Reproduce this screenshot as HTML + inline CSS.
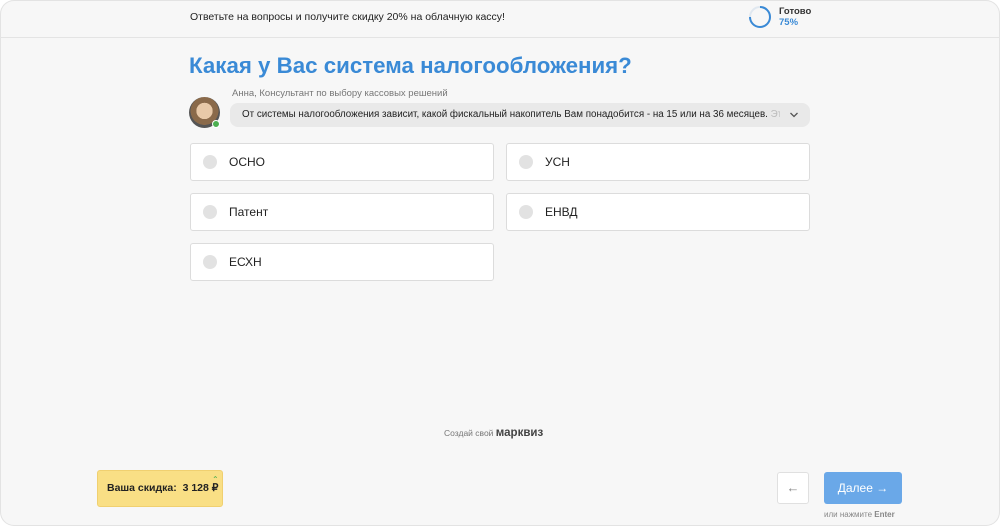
<!DOCTYPE html>
<html><head><meta charset="utf-8"><style>
*{box-sizing:border-box;margin:0;padding:0}
body{width:1000px;height:527px;background:#fff;font-family:"Liberation Sans",sans-serif;position:relative;overflow:hidden}
.frame{position:absolute;left:0;top:0;width:1000px;height:526px;background:#f7f7f7;box-shadow:inset 0 0 0 1px #e3e3e3;border-radius:14px;overflow:hidden}
.hdr{position:absolute;left:0;top:0;width:100%;height:38px;border-bottom:1px solid #e4e4e4}
.abs{position:absolute}
.opt{position:absolute;width:304px;height:38px;background:#fff;border:1px solid #dcdcdc;border-radius:3px;font-size:12px;color:#222;line-height:36px;padding-left:38px}
.opt:before{content:"";position:absolute;left:12px;top:11px;width:14px;height:14px;border-radius:50%;background:#e2e2e2}
</style></head><body>
<div class="frame">
<div class="hdr">
<div class="abs" style="left:190px;top:11px;font-size:10.5px;color:#222">Ответьте на вопросы и получите скидку 20% на облачную кассу!</div>
<svg class="abs" style="left:748px;top:5px" width="24" height="24" viewBox="0 0 24 24"><circle cx="12" cy="12" r="10" fill="none" stroke="#e0e8f0" stroke-width="2"/><path d="M12 2 A10 10 0 1 1 2 12" fill="none" stroke="#3a8ad6" stroke-width="2"/></svg>
<div class="abs" style="left:779px;top:6px;font-size:9.5px;color:#333;font-weight:bold">Готово</div>
<div class="abs" style="left:779px;top:17px;font-size:9.5px;color:#3a8ad6;font-weight:bold">75%</div>
</div>
<div class="abs" style="left:189px;top:53px;font-size:22.3px;font-weight:bold;color:#3a8ad6">Какая у Вас система налогообложения?</div>
<div class="abs" style="left:232px;top:88px;font-size:9.5px;color:#777">Анна, Консультант по выбору кассовых решений</div>
<div class="abs" style="left:189px;top:97px;width:31px;height:31px;border-radius:50%;background:radial-gradient(circle at 50% 45%,#e8c9a8 0 35%,#8a6a4a 36% 60%,#555 61%)"></div>
<div class="abs" style="left:212px;top:120px;width:8px;height:8px;border-radius:50%;background:#4caf50;border:1.5px solid #fff"></div>
<div class="abs" style="left:230px;top:103px;width:580px;height:24px;background:#e9e9e9;border-radius:8px;font-size:9.8px;color:#222;line-height:24px;padding-left:12px;white-space:nowrap;overflow:hidden"><span style="display:inline-block;width:538px;overflow:hidden;vertical-align:top">От системы налогообложения зависит, какой фискальный накопитель Вам понадобится - на 15 или на 36 месяцев. <span style="color:#bbb">Эт</span></span></div>
<svg class="abs" style="left:789px;top:111px" width="10" height="8" viewBox="0 0 10 8"><path d="M1.5 2 L5 5.5 L8.5 2" fill="none" stroke="#555" stroke-width="1.3"/></svg>
<div class="opt" style="left:190px;top:143px">ОСНО</div>
<div class="opt" style="left:506px;top:143px">УСН</div>
<div class="opt" style="left:190px;top:193px">Патент</div>
<div class="opt" style="left:506px;top:193px">ЕНВД</div>
<div class="opt" style="left:190px;top:243px">ЕСХН</div>
<div class="abs" style="left:444px;top:427px;font-size:8.5px;color:#777">Создай свой <b style="font-size:11.5px;color:#444">марквиз</b></div>
<div class="abs" style="left:97px;top:470px;width:126px;height:37px;background:#f9df85;border:1px solid #f0d070;border-radius:3px;font-size:10.5px;font-weight:bold;color:#222;line-height:35px;padding-left:9px">Ваша скидка:&nbsp; 3 128 ₽</div>
<div class="abs" style="left:212px;top:475px;font-size:8px;color:#4caf50">⌃</div>
<div class="abs" style="left:777px;top:472px;width:32px;height:32px;background:#fff;border:1px solid #e0e0e0;border-radius:3px;text-align:center;line-height:30px;color:#888;font-size:13px">←</div>
<div class="abs" style="left:824px;top:472px;width:78px;height:32px;background:#6aa8e8;border-radius:3px;color:#fff;font-size:12px;line-height:32px;text-align:center">Далее →</div>
<div class="abs" style="left:824px;top:510px;font-size:8px;color:#888">или нажмите <b>Enter</b></div>
</div>
</body></html>
